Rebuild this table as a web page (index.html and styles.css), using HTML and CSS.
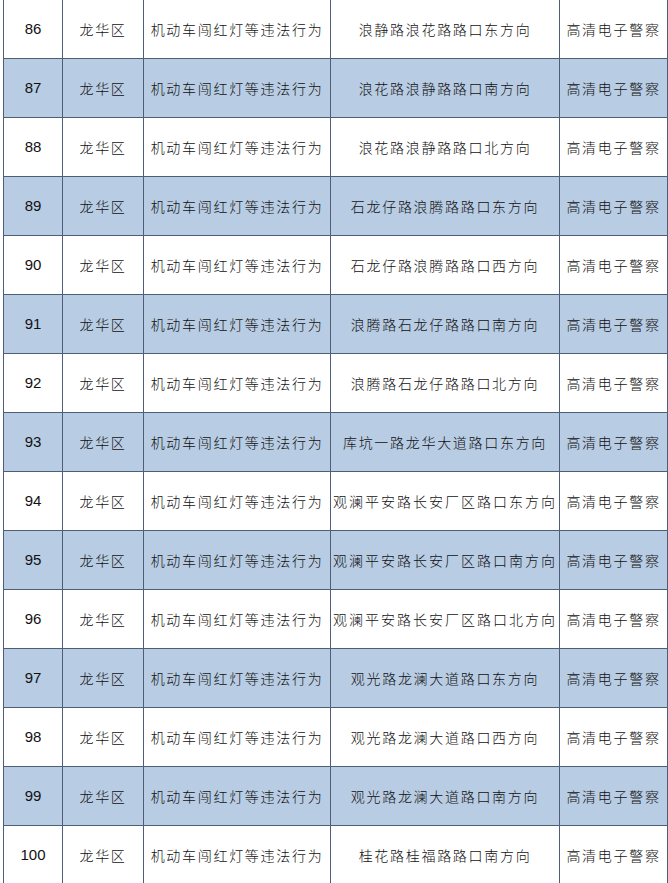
FILE: index.html
```html
<!DOCTYPE html>
<html lang="zh-CN">
<head>
<meta charset="utf-8">
<title>违法行为抓拍点位</title>
<link rel="stylesheet" href="styles.css">
</head>
<body>
<div class="sheet">
<table class="grid">
<colgroup>
<col class="c-no"><col class="c-area"><col class="c-act"><col class="c-loc"><col class="c-dev">
</colgroup>
<tbody>
<tr><td class="no">86</td><td>龙华区</td><td>机动车闯红灯等违法行为</td><td>浪静路浪花路路口东方向</td><td>高清电子警察</td></tr>
<tr class="alt"><td class="no">87</td><td>龙华区</td><td>机动车闯红灯等违法行为</td><td>浪花路浪静路路口南方向</td><td>高清电子警察</td></tr>
<tr><td class="no">88</td><td>龙华区</td><td>机动车闯红灯等违法行为</td><td>浪花路浪静路路口北方向</td><td>高清电子警察</td></tr>
<tr class="alt"><td class="no">89</td><td>龙华区</td><td>机动车闯红灯等违法行为</td><td>石龙仔路浪腾路路口东方向</td><td>高清电子警察</td></tr>
<tr><td class="no">90</td><td>龙华区</td><td>机动车闯红灯等违法行为</td><td>石龙仔路浪腾路路口西方向</td><td>高清电子警察</td></tr>
<tr class="alt"><td class="no">91</td><td>龙华区</td><td>机动车闯红灯等违法行为</td><td>浪腾路石龙仔路路口南方向</td><td>高清电子警察</td></tr>
<tr><td class="no">92</td><td>龙华区</td><td>机动车闯红灯等违法行为</td><td>浪腾路石龙仔路路口北方向</td><td>高清电子警察</td></tr>
<tr class="alt"><td class="no">93</td><td>龙华区</td><td>机动车闯红灯等违法行为</td><td>库坑一路龙华大道路口东方向</td><td>高清电子警察</td></tr>
<tr><td class="no">94</td><td>龙华区</td><td>机动车闯红灯等违法行为</td><td class="wide">观澜平安路长安厂区路口东方向</td><td>高清电子警察</td></tr>
<tr class="alt"><td class="no">95</td><td>龙华区</td><td>机动车闯红灯等违法行为</td><td class="wide">观澜平安路长安厂区路口南方向</td><td>高清电子警察</td></tr>
<tr><td class="no">96</td><td>龙华区</td><td>机动车闯红灯等违法行为</td><td class="wide">观澜平安路长安厂区路口北方向</td><td>高清电子警察</td></tr>
<tr class="alt"><td class="no">97</td><td>龙华区</td><td>机动车闯红灯等违法行为</td><td>观光路龙澜大道路口东方向</td><td>高清电子警察</td></tr>
<tr><td class="no">98</td><td>龙华区</td><td>机动车闯红灯等违法行为</td><td>观光路龙澜大道路口西方向</td><td>高清电子警察</td></tr>
<tr class="alt"><td class="no">99</td><td>龙华区</td><td>机动车闯红灯等违法行为</td><td>观光路龙澜大道路口南方向</td><td>高清电子警察</td></tr>
<tr><td class="no">100</td><td>龙华区</td><td>机动车闯红灯等违法行为</td><td>桂花路桂福路路口南方向</td><td>高清电子警察</td></tr>
</tbody>
</table>
</div>
</body>
</html>
```
FILE: styles.css
```css
html, body {
  margin: 0;
  padding: 0;
  background: #ffffff;
}
.sheet {
  padding-left: 3px;
  height: 883px;
  overflow: hidden;
}
.grid {
  border-collapse: collapse;
  table-layout: fixed;
  width: 664px;
  margin-top: -1px;
  font-family: "Noto Sans CJK SC", "Noto Sans", sans-serif;
  font-weight: 300;
  font-size: 14px;
  color: #111111;
}
.c-no { width: 59px; }
.c-area { width: 81px; }
.c-act { width: 187px; }
.c-loc { width: 229px; }
.c-dev { width: 108px; }
.grid td {
  height: 58px;
  padding: 0;
  border: 1px solid #4e5d78;
  text-align: center;
  vertical-align: middle;
  white-space: nowrap;
  letter-spacing: 1.7px;
  line-height: 20px;
}
.grid td.no {
  font-family: "Liberation Sans", Arial, sans-serif;
  font-weight: 400;
  font-size: 15px;
  letter-spacing: 0;
}
.grid td.wide {
  letter-spacing: 2px;
}
.grid tr.alt td {
  background: #b8cce4;
}
```
